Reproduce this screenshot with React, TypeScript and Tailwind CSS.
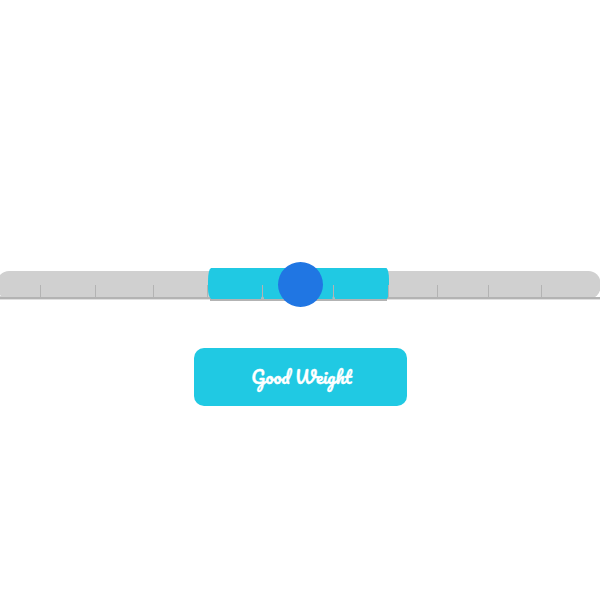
import React from "react";

const TICKS = [40, 95, 153, 207, 262, 333, 388, 437, 488, 541];

function Gauge() {
  return (
    <svg
      viewBox="0 0 600 45"
      className="block h-[45px] w-[600px]"
      role="img"
      aria-label="Weight scale"
    >
      <rect x="-3" y="9" width="603.500" height="28" rx="12" fill="#d0d0d0" />
      <rect x="0" y="34" width="595" height="1" fill="#d0d0d0" />
      <rect x="0" y="35" width="600" height="2" fill="#b3b3b3" />
      <rect x="0" y="37" width="600" height="1" fill="#e0e0e0" />
      <rect x="207" y="23" width="1" height="12" fill="#b3b3b3" />
      <rect x="210" y="37" width="177" height="2" fill="#b3b3b3" />
      <path
        d="M211 6H386.500Q389 9 389 17V27Q389 34 387 37H211Q208 34 208 27V19Q208 8 211 6Z"
        fill="#20c9e3"
      />
      {TICKS.filter((x) => x !== 207).map((x) => (
        <rect key={x} x={x} y="23" width="1" height="12" fill="#b3b3b3" />
      ))}
      <path d="M261 37V35.500L262 34.500H263L264 35.500V37Z" fill="#a9bcbe" />
      <path d="M332.500 37V35L333 34.500H334L335 36V37Z" fill="#a9bcbe" />
      <circle cx="300.500" cy="22.500" r="22.500" fill="#2076e3" />
    </svg>
  );
}

export default function App() {
  return (
    <main className="flex h-[600px] w-[600px] flex-col items-center overflow-hidden bg-white pt-[262px]">
      <Gauge />
      <button className="mt-[41px] ml-px flex h-[58px] w-[213px] items-center justify-center rounded-[10px] bg-[#20c9e3] text-white">
        <span className="translate-x-px font-['Pacifico',cursive] text-[17.6px] leading-none font-normal whitespace-nowrap [-webkit-text-stroke:0.35px_white]">
          Good Weight
        </span>
      </button>
    </main>
  );
}
